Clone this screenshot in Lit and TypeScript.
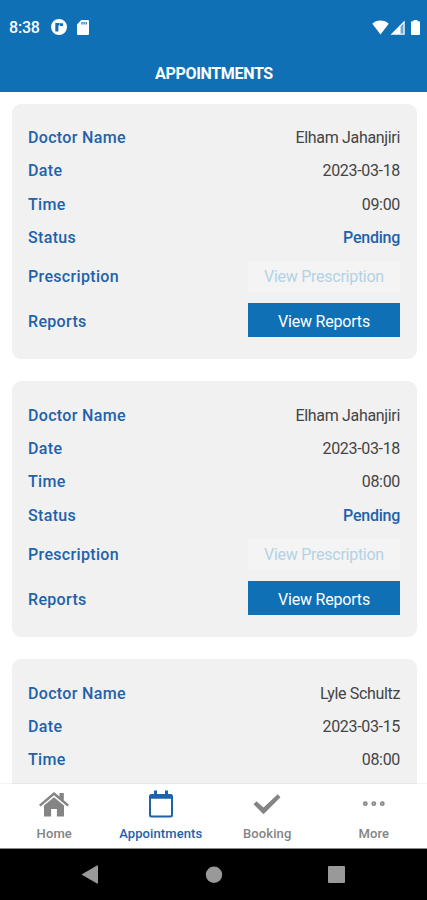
import { LitElement, html, css, svg } from "lit";
import { customElement, property } from "lit/decorators.js";

interface Appointment {
  doctor: string;
  date: string;
  time: string;
  status: string;
}

const appointments: Appointment[] = [
  { doctor: "Elham Jahanjiri", date: "2023-03-18", time: "09:00", status: "Pending" },
  { doctor: "Elham Jahanjiri", date: "2023-03-18", time: "08:00", status: "Pending" },
  { doctor: "Lyle Schultz", date: "2023-03-15", time: "08:00", status: "Pending" },
];

@customElement("status-bar")
export class StatusBar extends LitElement {
  static styles = css`
    :host { display: flex; align-items: center; height: 55px; color: #fff; }
    .clock { margin-left: 9px; width: 42px; font-size: 16px; font-weight: 500; letter-spacing: -0.2px; }
    .spacer { flex: 1; }
    svg { display: block; fill: #fff; position: relative; top: -0.5px; }
    .sd { margin-left: 10px; }
    .cell { margin-left: 1px; }
    .battery { margin: 0 7px 0 6px; }
  `;
  render() {
    return html`
      <span class="clock">8:38</span>
      <svg width="16" height="16" viewBox="0 0 16 16">
        <path fill-rule="evenodd" d="M8 0a8 8 0 1 0 0 16A8 8 0 0 0 8 0zM4.3 4H8.6V6.6H7.4V12.4H4.3zM9 4.2h3v2.9H9z" />
      </svg>
      <svg class="sd" width="12" height="15" viewBox="0 0 12 15">
        <path fill-rule="evenodd" d="M4.3 0H11a1 1 0 0 1 1 1v13a1 1 0 0 1-1 1H1a1 1 0 0 1-1-1V4.4zM4.4 2v2.6h1.2V2zM6.5 2v2.6h1.2V2zM8.6 2v2.6h1.2V2z" />
      </svg>
      <span class="spacer"></span>
      <svg width="17" height="15" viewBox="0 0 17 15">
        <path d="M.3 3.8C2.6 1.5 5.2.6 8.5.6S14.4 1.5 16.7 3.8L8.5 14.5z" />
      </svg>
      <svg class="cell" width="15" height="15" viewBox="0 0 15 15">
        <path fill-rule="evenodd" d="M14.7.5V14.7H.5zM10.7 6.2V13.4H13.3V3.7z" />
        <path fill-opacity="0.4" d="M10.7 6.2V13.4H13.3V3.7z" />
      </svg>
      <svg class="battery" width="9" height="15" viewBox="0 0 9 15">
        <path d="M2.6 0H6.4V1.3H8a1 1 0 0 1 1 1V14a1 1 0 0 1-1 1H1a1 1 0 0 1-1-1V2.3a1 1 0 0 1 1-1H2.6z" />
      </svg>
    `;
  }
}

@customElement("appointment-card")
export class AppointmentCard extends LitElement {
  @property({ attribute: false }) item!: Appointment;

  static styles = css`
    :host {
      display: block;
      box-sizing: border-box;
      flex: none;
      height: 255.6px;
      padding: 17.2px 16.5px 0 16.5px;
      border-radius: 9px;
      background: #f1f1f1;
      font-size: 16px;
    }
    .row { display: flex; align-items: center; justify-content: space-between; height: 33.35px; }
    .label { color: #1e62ab; font-weight: 500; letter-spacing: 0.33px; }
    .value { color: #444; letter-spacing: -0.33px; }
    .status { color: #1e62ab; font-weight: 500; letter-spacing: -0.25px; }
    .prescription { height: 45px; }
    .reports { height: 44.5px; }
    button {
      width: 152px;
      padding: 0;
      border: 0;
      font: 400 16px Roboto, sans-serif;
      letter-spacing: -0.2px;
    }
    .disabled { height: 31px; background: #f4f4f4; color: #b3d2e5; letter-spacing: -0.27px; }
    .primary { height: 34px; margin-bottom: 2px; padding-top: 2px; background: #0f70b5; color: #fff; }
  `;
  render() {
    const { doctor, date, time, status } = this.item;
    return html`
      <div class="row"><span class="label">Doctor Name</span><span class="value">${doctor}</span></div>
      <div class="row"><span class="label">Date</span><span class="value">${date}</span></div>
      <div class="row"><span class="label">Time</span><span class="value">${time}</span></div>
      <div class="row"><span class="label">Status</span><span class="status">${status}</span></div>
      <div class="row prescription">
        <span class="label">Prescription</span><button class="disabled" disabled>View Prescription</button>
      </div>
      <div class="row reports">
        <span class="label">Reports</span><button class="primary">View Reports</button>
      </div>
    `;
  }
}

const tabs = [
  {
    name: "Home",
    icon: svg`<path d="M0 14.7 15 2l5.5 4.5V3h4.3v7.2L30 14.7l-1.6 1.8L15 5.3 1.6 16.5z"/>
      <path d="M5 15.5 15 7.2l10 8.3V26.5H17.9V19H12.1v7.5H5z"/>`,
  },
  {
    name: "Appointments",
    icon: svg`<path fill-rule="evenodd" d="M5.3 4h19.4a2.3 2.3 0 0 1 2.3 2.3v18.9a2.3 2.3 0 0 1-2.3 2.3H5.3A2.3 2.3 0 0 1 3 25.2V6.3a2.3 2.3 0 0 1 2.3-2.3zM5 8.8V24.7a.8.8 0 0 0 .8.8H24.2a.8.8 0 0 0 .8-.8V8.8z"/>
      <path d="M8 .6h3V6H8zM19 .6h3V6h-3z"/>`,
  },
  {
    name: "Booking",
    icon: svg`<path d="M1.5 14.3 4.5 11.3 11.5 17.5 25.7 4.2 28.5 7.2 11.5 24.2z"/>`,
  },
  {
    name: "More",
    icon: svg`<circle cx="6.3" cy="13.7" r="2.4"/><circle cx="14.8" cy="13.7" r="2.4"/><circle cx="23.3" cy="13.7" r="2.4"/>
      <g fill="#fff" fill-opacity="0.5"><circle cx="6.3" cy="13.7" r=".9"/><circle cx="14.8" cy="13.7" r=".9"/><circle cx="23.3" cy="13.7" r=".9"/></g>`,
  },
];

@customElement("tab-bar")
export class TabBar extends LitElement {
  @property() active = "Appointments";

  static styles = css`
    :host {
      display: flex;
      box-sizing: border-box;
      height: 65px;
      padding-left: 1px;
      background: #fff;
      border-bottom: 1px solid #8a8a8a;
      box-shadow: 0 -1px 1px rgba(0, 0, 0, 0.04);
    }
    .tab {
      display: flex;
      flex: 1 1 0;
      min-width: 0;
      flex-direction: column;
      align-items: center;
      padding-top: 6px;
      color: #848484;
      font-size: 13px;
      font-weight: 500;
      line-height: 18px;
      letter-spacing: 0.1px;
    }
    .active { color: #1e62ab; }
    svg { display: block; flex: none; fill: currentColor; margin-bottom: 7px; }
  `;
  render() {
    return tabs.map(
      (t) => html`<div class="tab ${t.name === this.active ? "active" : ""}">
        <svg width="30" height="28" viewBox="0 0 30 28">${t.icon}</svg>
        <span>${t.name}</span>
      </div>`,
    );
  }
}

@customElement("app-root")
export class AppRoot extends LitElement {
  static styles = css`
    :host {
      display: flex;
      flex-direction: column;
      width: 100%;
      height: 900px;
      overflow: hidden;
      background: #fff;
      font-family: Roboto, sans-serif;
    }
    header { flex: none; height: 91.6px; background: #0f70b5; }
    .title {
      height: 37px;
      padding-left: 1px;
      line-height: 37px;
      text-align: center;
      color: #fff;
      font-size: 16px;
      font-weight: 700;
      letter-spacing: -0.33px;
    }
    .list {
      display: flex;
      flex: 1;
      min-height: 0;
      flex-direction: column;
      gap: 22.25px;
      padding: 12px 10.5px 0 11.5px;
      overflow: hidden;
    }
    tab-bar { flex: none; position: relative; }
    .system { display: flex; flex: none; height: 51px; background: #000; }
    .system svg { display: block; fill: #999; }
  `;
  render() {
    return html`
      <header>
        <status-bar></status-bar>
        <div class="title">APPOINTMENTS</div>
      </header>
      <main class="list">
        ${appointments.map((a) => html`<appointment-card .item=${a}></appointment-card>`)}
      </main>
      <tab-bar></tab-bar>
      <div class="system">
        <svg width="427" height="51" viewBox="0 0 427 51">
          <path d="M81.5 25.5 97 16.5a.6.6 0 0 1 1 .5V34a.6.6 0 0 1-1 .5z" />
          <circle cx="214" cy="25.7" r="8.2" />
          <rect x="328" y="17" width="17" height="17" rx="1" />
        </svg>
      </div>
    `;
  }
}
